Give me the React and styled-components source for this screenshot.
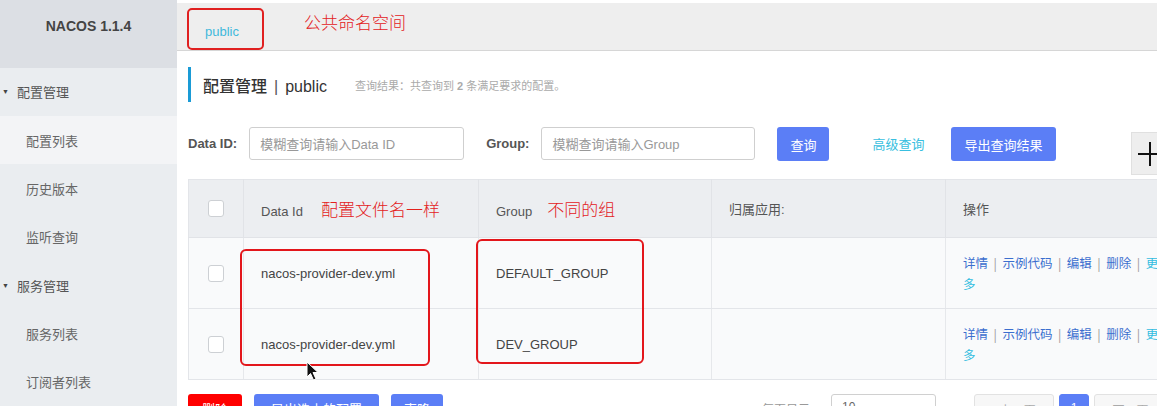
import React from "react";
import styled, { createGlobalStyle } from "styled-components";

const GlobalStyle = createGlobalStyle`
  html, body {
    margin: 0;
    padding: 0;
    background: #ffffff;
    overflow: hidden;
  }
  body {
    font-family: "Liberation Sans", "Noto Sans CJK SC", sans-serif;
    color: #333;
  }
`;

const Page = styled.div`
  display: flex;
  width: 1157px;
  height: 406px;
  overflow: hidden;
`;

const Sidebar = styled.aside`
  width: 177px;
  flex-shrink: 0;
  background: #eaedf0;
  display: flex;
  flex-direction: column;
`;

const Logo = styled.div`
  height: 68px;
  background: #dcdfe4;
  display: flex;
  align-items: center;
  justify-content: center;
  padding-bottom: 16px;
  box-sizing: border-box;
  font-size: 14px;
  font-weight: bold;
  color: #444;
`;

const NavGroup = styled.div`
  height: 48.5px;
  display: flex;
  align-items: center;
  font-size: 13px;
  color: #555;
  padding-left: 2px;
  span.arrow {
    font-size: 7px;
    color: #444;
    margin-right: 8px;
  }
`;

const NavItem = styled.div`
  height: 48.5px;
  display: flex;
  align-items: center;
  padding-left: 26px;
  font-size: 13px;
  color: #666;
  background: ${({ $active }) => ($active ? "#f3f4f6" : "transparent")};
`;

const Main = styled.main`
  flex: 1;
  min-width: 0;
  overflow: hidden;
  display: flex;
  flex-direction: column;
`;

const TopBar = styled.div`
  height: 50px;
  margin-top: 3px;
  background: #eeeeee;
  border-bottom: 1px solid #d6d6d6;
  display: flex;
  align-items: flex-start;
  padding-left: 10px;
`;

const NsTab = styled.div`
  margin-top: 5px;
  width: 77px;
  height: 42px;
  box-sizing: border-box;
  border: 2px solid #e02020;
  border-radius: 5px;
  display: flex;
  align-items: center;
  padding: 4px 0 0 16px;
  font-size: 13px;
  color: #3fb9dc;
`;

const Note = styled.span`
  font-family: "Noto Sans CJK SC", sans-serif;
  font-size: 17px;
  color: #e3211d;
  margin-left: ${({ $ml }) => $ml || 0}px;
  margin-top: ${({ $mt }) => $mt || 0}px;
  font-weight: 300;
  white-space: nowrap;
`;

const Content = styled.div`
  padding-left: 11px;
  width: 1100px;
  display: flex;
  flex-direction: column;
`;

const TitleRow = styled.div`
  margin-top: 16px;
  height: 35px;
  border-left: 3px solid #1a9bd6;
  display: flex;
  align-items: center;
  padding-left: 12px;
`;

const Title = styled.h2`
  margin: 0;
  font-size: 16px;
  font-weight: 500;
  color: #333;
  font-family: "Liberation Sans", "Noto Sans CJK SC", sans-serif;
  span {
    margin: 0 7px;
    font-weight: normal;
    color: #555;
  }
`;

const Summary = styled.span`
  margin-left: 28px;
  font-size: 11px;
  color: #aaa;
  b {
    font-weight: bold;
  }
`;

const FilterRow = styled.div`
  margin-top: 25px;
  display: flex;
  align-items: flex-start;
  & > * {
    flex-shrink: 0;
    white-space: nowrap;
  }
`;

const Label = styled.label`
  height: 33px;
  display: flex;
  align-items: center;
  font-size: 13px;
  font-weight: bold;
  color: #555;
  margin-left: ${({ $ml }) => $ml || 0}px;
  margin-right: 12px;
`;

const Input = styled.div`
  width: ${({ $w }) => $w}px;
  height: 33px;
  box-sizing: border-box;
  border: 1px solid #cfcfcf;
  border-radius: 3px;
  display: flex;
  align-items: center;
  padding-left: 10px;
  font-size: 13px;
  color: #999;
  background: #fff;
`;

const Button = styled.div`
  height: ${({ $h }) => $h || 34}px;
  padding: 0 ${({ $px }) => $px || 13}px;
  border-radius: 3px;
  background: ${({ $danger }) => ($danger ? "#ff0000" : "#5b7ef6")};
  color: #fff;
  font-size: 13px;
  display: flex;
  align-items: center;
  margin-left: ${({ $ml }) => $ml || 0}px;
  flex-shrink: 0;
  white-space: nowrap;
`;

const TextLink = styled.span`
  height: 33px;
  display: flex;
  align-items: center;
  font-size: 13px;
  color: #39bfe0;
  margin-left: ${({ $ml }) => $ml || 0}px;
`;

const PlusBox = styled.div`
  margin-left: 75px;
  margin-top: 5px;
  width: 40px;
  height: 43px;
  background: #eeeeee;
  border: 1px solid #e0e0e0;
  box-sizing: border-box;
  display: flex;
  align-items: center;
  padding-left: 4px;
`;

const TableWrap = styled.div`
  position: relative;
  margin-top: 4px;
  width: 1017px;
`;

const Table = styled.table`
  width: 1017px;
  table-layout: fixed;
  border-collapse: collapse;
  border: 1px solid #e3e5e9;
  font-size: 13px;
`;

const Th = styled.th`
  height: 58px;
  box-sizing: border-box;
  background: #eceef1;
  border-right: 1px solid #e1e3e7;
  border-bottom: 1px solid #e1e3e7;
  text-align: ${({ $center }) => ($center ? "center" : "left")};
  padding: ${({ $center }) => ($center ? "0" : "0 17px")};
  font-weight: normal;
  color: #555;
  white-space: nowrap;
`;

const Td = styled.td`
  height: 71px;
  box-sizing: border-box;
  background: #f9fafb;
  border-right: 1px solid #e6e8eb;
  border-bottom: 1px solid #e3e5e9;
  text-align: ${({ $center }) => ($center ? "center" : "left")};
  padding: ${({ $center }) => ($center ? "0" : "0 17px")};
  color: #444;
  vertical-align: middle;
`;

const Check = styled.span`
  display: inline-block;
  width: 16px;
  height: 17px;
  box-sizing: border-box;
  border: 1px solid #cdd0d4;
  border-radius: 3px;
  background: #fff;
  vertical-align: middle;
`;

const Actions = styled.div`
  width: 200px;
  font-family: "Noto Sans CJK SC", sans-serif;
  font-size: 12.5px;
  line-height: 21px;
`;

const ActLink = styled.span`
  color: ${({ $more }) => ($more ? "#33bde0" : "#3c6fcf")};
`;

const Sep = styled.span`
  color: #999;
  margin: 0 5.5px;
`;

const MarkBox = styled.div`
  position: absolute;
  left: ${({ $x }) => $x}px;
  top: ${({ $y }) => $y}px;
  width: ${({ $w }) => $w}px;
  height: ${({ $h }) => $h}px;
  border: 2px solid #e3161b;
  border-radius: 6px;
  box-sizing: border-box;
  pointer-events: none;
`;

const Cursor = styled.svg`
  position: absolute;
  left: 118px;
  top: 182px;
`;

const BottomBar = styled.div`
  margin-top: 14px;
  display: flex;
  align-items: flex-start;
  & > * {
    flex-shrink: 0;
    white-space: nowrap;
  }
`;

const PageSizeLabel = styled.span`
  margin-left: 319px;
  margin-top: 6px;
  font-size: 12px;
  color: #999;
`;

const Select = styled.div`
  margin-left: 21px;
  width: 105px;
  height: 32px;
  box-sizing: border-box;
  border: 1px solid #d0d0d0;
  border-radius: 3px;
  padding: 5px 10px;
  font-size: 12px;
  color: #666;
`;

const PageBtn = styled.div`
  margin-left: ${({ $ml }) => $ml || 5}px;
  width: ${({ $w }) => $w}px;
  height: 32px;
  box-sizing: border-box;
  border: 1px solid ${({ $active }) => ($active ? "#5b7ef6" : "#e2e2e2")};
  background: ${({ $active }) => ($active ? "#5b7ef6" : "#f7f7f7")};
  border-radius: 3px;
  color: ${({ $active }) => ($active ? "#fff" : "#aaa")};
  font-size: 12px;
  text-align: center;
  padding-top: 6px;
`;

const rows = [
  { id: "nacos-provider-dev.yml", group: "DEFAULT_GROUP" },
  { id: "nacos-provider-dev.yml", group: "DEV_GROUP" },
];

const colWidths = [55, 235, 233, 234, 260];

function ActionCell() {
  return (
    <Actions>
      <ActLink>详情</ActLink>
      <Sep>|</Sep>
      <ActLink>示例代码</ActLink>
      <Sep>|</Sep>
      <ActLink>编辑</ActLink>
      <Sep>|</Sep>
      <ActLink>删除</ActLink>
      <Sep>|</Sep>
      <ActLink $more>更多</ActLink>
    </Actions>
  );
}

export default function App() {
  return (
    <>
      <GlobalStyle />
      <Page>
        <Sidebar>
          <Logo>NACOS 1.1.4</Logo>
          <NavGroup>
            <span className="arrow">▼</span>配置管理
          </NavGroup>
          <NavItem $active>配置列表</NavItem>
          <NavItem>历史版本</NavItem>
          <NavItem>监听查询</NavItem>
          <NavGroup>
            <span className="arrow">▼</span>服务管理
          </NavGroup>
          <NavItem>服务列表</NavItem>
          <NavItem>订阅者列表</NavItem>
        </Sidebar>

        <Main>
          <TopBar>
            <NsTab>public</NsTab>
            <Note $ml={40} $mt={6}>公共命名空间</Note>
          </TopBar>

          <Content>
            <TitleRow>
              <Title>
                配置管理<span>|</span>public
              </Title>
              <Summary>
                查询结果：共查询到 <b>2</b> 条满足要求的配置。
              </Summary>
            </TitleRow>

            <FilterRow>
              <Label>Data ID:</Label>
              <Input $w={215}>模糊查询请输入Data ID</Input>
              <Label $ml={22}>Group:</Label>
              <Input $w={214}>模糊查询请输入Group</Input>
              <Button $ml={22}>查询</Button>
              <TextLink $ml={43}>高级查询</TextLink>
              <Button $ml={27}>导出查询结果</Button>
              <PlusBox>
                <svg width="28" height="28" viewBox="0 0 28 28">
                  <path d="M14 2v24M2 14h24" stroke="#111" strokeWidth="2" />
                </svg>
              </PlusBox>
            </FilterRow>

            <TableWrap>
              <Table>
                <colgroup>
                  {colWidths.map((w, i) => (
                    <col key={i} style={{ width: w }} />
                  ))}
                </colgroup>
                <thead>
                  <tr>
                    <Th $center>
                      <Check />
                    </Th>
                    <Th>
                      Data Id<Note $ml={18}>配置文件名一样</Note>
                    </Th>
                    <Th>
                      Group<Note $ml={15}>不同的组</Note>
                    </Th>
                    <Th>归属应用:</Th>
                    <Th>操作</Th>
                  </tr>
                </thead>
                <tbody>
                  {rows.map((r, i) => (
                    <tr key={i}>
                      <Td $center>
                        <Check />
                      </Td>
                      <Td>{r.id}</Td>
                      <Td>{r.group}</Td>
                      <Td />
                      <Td>
                        <ActionCell />
                      </Td>
                    </tr>
                  ))}
                </tbody>
              </Table>
              <MarkBox $x={52} $y={70} $w={190} $h={117} />
              <MarkBox $x={288} $y={60} $w={168} $h={125} />
              <Cursor width="14" height="20" viewBox="0 0 14 20">
                <path
                  d="M1 1 L1 16 L4.5 12.5 L7.5 19 L10 18 L7 11.5 L12 11.5 Z"
                  fill="#111"
                  stroke="#fff"
                  strokeWidth="1"
                />
              </Cursor>
            </TableWrap>

            <BottomBar>
              <Button $danger $px={14} $h={28}>删除</Button>
              <Button $ml={12} $px={17} $h={28}>导出选中的配置</Button>
              <Button $ml={12} $px={13} $h={28}>克隆</Button>
              <PageSizeLabel>每页显示</PageSizeLabel>
              <Select>10</Select>
              <PageBtn $ml={38} $w={80}>‹ 上一页</PageBtn>
              <PageBtn $active $w={30}>1</PageBtn>
              <PageBtn $w={80}>下一页 ›</PageBtn>
            </BottomBar>
          </Content>
        </Main>
      </Page>
    </>
  );
}
